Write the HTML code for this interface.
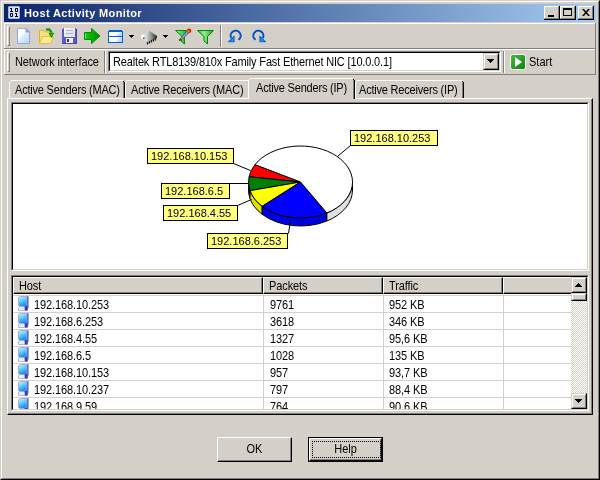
<!DOCTYPE html>
<html><head><meta charset="utf-8">
<style>
*{margin:0;padding:0;box-sizing:border-box}
html,body{width:600px;height:480px;overflow:hidden;background:#D4D0C8}
body{position:relative;font-family:"Liberation Sans",sans-serif;font-size:11px;color:#000}
.a{position:absolute}
.t{position:absolute;white-space:nowrap;line-height:13px;will-change:transform}
.u{transform:scaleY(1.12);transform-origin:0 6.4px}
</style></head><body>
<!-- window frame -->
<div class="a" style="left:0;top:0;width:600px;height:480px;border-top:1px solid #D4D0C8;border-left:1px solid #D4D0C8;border-right:1px solid #000;border-bottom:1px solid #000"></div>
<div class="a" style="left:1px;top:1px;width:598px;height:478px;border-top:1px solid #fff;border-left:1px solid #fff;border-right:1px solid #808080;border-bottom:1px solid #808080"></div>
<!-- title bar -->
<div class="a" style="left:4px;top:4px;width:592px;height:18px;background:linear-gradient(to right,#0A246A,#A6CAF0)"></div>
<svg class="a" style="left:8px;top:6px" width="12" height="13" viewBox="0 0 12 13" shape-rendering="crispEdges"><rect x="0" y="0" width="12" height="13" fill="#9CB0F8"/><rect x="1" y="1" width="10" height="11" fill="#D8E2FF"/><rect x="0" y="0" width="1" height="1" fill="#3050B0"/><rect x="11" y="0" width="1" height="1" fill="#3050B0"/><rect x="0" y="12" width="1" height="1" fill="#3050B0"/><rect x="11" y="12" width="1" height="1" fill="#3050B0"/><rect x="2" y="2" width="1" height="1" fill="#000"/><rect x="3" y="2" width="1" height="1" fill="#000"/><rect x="3" y="3" width="1" height="1" fill="#000"/><rect x="3" y="4" width="1" height="1" fill="#000"/><rect x="2" y="5" width="1" height="1" fill="#000"/><rect x="3" y="5" width="1" height="1" fill="#000"/><rect x="4" y="5" width="1" height="1" fill="#000"/><rect x="8" y="2" width="1" height="1" fill="#000"/><rect x="7" y="3" width="1" height="1" fill="#000"/><rect x="9" y="3" width="1" height="1" fill="#000"/><rect x="7" y="4" width="1" height="1" fill="#000"/><rect x="9" y="4" width="1" height="1" fill="#000"/><rect x="8" y="5" width="1" height="1" fill="#000"/><rect x="7" y="2" width="1" height="1" fill="#103060"/><rect x="9" y="2" width="1" height="1" fill="#103060"/><rect x="7" y="5" width="1" height="1" fill="#103060"/><rect x="9" y="5" width="1" height="1" fill="#103060"/><rect x="3" y="7" width="1" height="1" fill="#000"/><rect x="2" y="8" width="1" height="1" fill="#000"/><rect x="4" y="8" width="1" height="1" fill="#000"/><rect x="2" y="9" width="1" height="1" fill="#000"/><rect x="4" y="9" width="1" height="1" fill="#000"/><rect x="3" y="10" width="1" height="1" fill="#000"/><rect x="2" y="7" width="1" height="1" fill="#103060"/><rect x="4" y="7" width="1" height="1" fill="#103060"/><rect x="2" y="10" width="1" height="1" fill="#103060"/><rect x="4" y="10" width="1" height="1" fill="#103060"/><rect x="7" y="7" width="1" height="1" fill="#000"/><rect x="8" y="7" width="1" height="1" fill="#000"/><rect x="8" y="8" width="1" height="1" fill="#000"/><rect x="8" y="9" width="1" height="1" fill="#000"/><rect x="7" y="10" width="1" height="1" fill="#000"/><rect x="8" y="10" width="1" height="1" fill="#000"/><rect x="9" y="10" width="1" height="1" fill="#000"/></svg>
<div class="t" style="left:24px;top:7px;color:#fff;font-weight:bold;font-size:11px;letter-spacing:0.37px">Host Activity Monitor</div>
<div class="a" style="left:544px;top:6px;width:16px;height:14px;background:#D4D0C8;border-right:1px solid #000;border-bottom:1px solid #000"></div>
<div class="a" style="left:544px;top:6px;width:15px;height:13px;border-top:1px solid #fff;border-left:1px solid #fff;border-right:1px solid #808080;border-bottom:1px solid #808080"></div>
<div class="a" style="left:548px;top:15px;width:6px;height:2px;background:#000"></div>
<div class="a" style="left:560px;top:6px;width:16px;height:14px;background:#D4D0C8;border-right:1px solid #000;border-bottom:1px solid #000"></div>
<div class="a" style="left:560px;top:6px;width:15px;height:13px;border-top:1px solid #fff;border-left:1px solid #fff;border-right:1px solid #808080;border-bottom:1px solid #808080"></div>
<div class="a" style="left:563px;top:8px;width:9px;height:8px;border:1px solid #000;border-top-width:2px"></div>
<div class="a" style="left:578px;top:6px;width:16px;height:14px;background:#D4D0C8;border-right:1px solid #000;border-bottom:1px solid #000"></div>
<div class="a" style="left:578px;top:6px;width:15px;height:13px;border-top:1px solid #fff;border-left:1px solid #fff;border-right:1px solid #808080;border-bottom:1px solid #808080"></div>
<svg class="a" style="left:582px;top:9px" width="8" height="7" viewBox="0 0 8 7"><path d="M0 0h2l2 2.5L6 0h2L5 3.5 8 7H6L4 4.5 2 7H0l3-3.5z" fill="#000"/></svg>

<!-- rebar -->
<div class="a" style="left:4px;top:23px;width:592px;height:1px;background:#fff"></div>
<div class="a" style="left:4px;top:23px;width:1px;height:51px;background:#fff"></div>
<div class="a" style="left:595px;top:23px;width:1px;height:52px;background:#808080"></div>
<div class="a" style="left:4px;top:48px;width:592px;height:1px;background:#808080"></div>
<div class="a" style="left:4px;top:49px;width:591px;height:1px;background:#fff"></div>
<div class="a" style="left:4px;top:74px;width:592px;height:1px;background:#808080"></div>
<!-- grippers -->
<div class="a" style="left:7px;top:26px;width:3px;height:20px;border-top:1px solid #fff;border-left:1px solid #fff;border-right:1px solid #808080;border-bottom:1px solid #808080"></div>
<div class="a" style="left:7px;top:52px;width:3px;height:20px;border-top:1px solid #fff;border-left:1px solid #fff;border-right:1px solid #808080;border-bottom:1px solid #808080"></div>
<svg class="a" style="left:16px;top:28px" width="16" height="16" viewBox="0 0 16 16">
<defs><linearGradient id="gnew" x1="0" y1="0" x2="0.9" y2="1"><stop offset="0.38" stop-color="#fff"/><stop offset="0.5" stop-color="#DCEEFC"/><stop offset="1" stop-color="#B4DAF8"/></linearGradient></defs>
<path d="M1.5 0.5H10L13.5 4V15.5H1.5Z" fill="url(#gnew)" stroke="#9CA2DA"/>
<path d="M10 0.5L13.5 4H10Z" fill="#68B4F4" stroke="#8A92D4" stroke-width="0.8"/>
</svg>
<svg class="a" style="left:39px;top:28px" width="16" height="16" viewBox="0 0 16 16">
<path d="M0.5 15.5V2.5H5.5L6.5 4H11.5V8" fill="#F8E080" stroke="#E0B020"/>
<path d="M0.5 15.5L3.5 8.5H14.5L11.5 15.5Z" fill="#FCEB98" stroke="#E6BE30"/>
<path d="M7 1.5H10.5L12.5 4.5" fill="none" stroke="#009000" stroke-width="2"/>
<path d="M10 5.5L14.5 5L12.5 9.5Z" fill="#20C020" stroke="#008000" stroke-width="0.8"/>
</svg>
<svg class="a" style="left:62px;top:28px" width="16" height="16" viewBox="0 0 16 16" shape-rendering="crispEdges">
<defs><linearGradient id="gflp" x1="0" y1="0" x2="1" y2="1"><stop offset="0" stop-color="#F4F6FC"/><stop offset="1" stop-color="#D8DEF4"/></linearGradient></defs>
<rect x="0" y="1" width="15" height="15" fill="#5A5AC8"/>
<rect x="1" y="0" width="13" height="1" fill="#5A5AC8"/>
<rect x="2" y="0" width="11" height="9" fill="url(#gflp)"/>
<rect x="4" y="2" width="7" height="1" fill="#B8B0A8"/>
<rect x="4" y="5" width="7" height="1" fill="#B8B0A8"/>
<rect x="4" y="10" width="7" height="6" fill="#F0F0F8"/>
<rect x="5" y="11" width="2" height="3" fill="#2830A0"/>
<rect x="14" y="1" width="1" height="15" fill="#4040A8"/>
<rect x="0" y="15" width="15" height="1" fill="#4848B0"/>
</svg>
<svg class="a" style="left:84px;top:28px" width="17" height="16" viewBox="0 0 17 16">
<defs><linearGradient id="garr" x1="0" y1="0" x2="1" y2="0"><stop offset="0" stop-color="#10D010"/><stop offset="1" stop-color="#008800"/></linearGradient></defs>
<path d="M0.5 4.5H7.5V0.5L16 8L7.5 15.5V11.5H0.5Z" fill="url(#garr)" stroke="#009000" stroke-width="1"/>
<path d="M1.5 5.5V10.5" stroke="#60F060" stroke-width="1"/>
</svg>
<svg class="a" style="left:108px;top:30px" width="15" height="13" viewBox="0 0 15 13" shape-rendering="crispEdges">
<defs><linearGradient id="gwin" x1="0" y1="0" x2="1" y2="0.3"><stop offset="0.6" stop-color="#fff"/><stop offset="1" stop-color="#B0D8F8"/></linearGradient></defs>
<rect x="0" y="1" width="15" height="12" fill="#0060D8"/>
<rect x="1" y="0" width="13" height="1" fill="#0060D8"/>
<rect x="1" y="2" width="13" height="4" fill="url(#gwin)"/>
<rect x="1" y="7" width="13" height="5" fill="url(#gwin)"/>
</svg>
<svg class="a" style="left:129px;top:35px" width="5" height="3" viewBox="0 0 5 3" shape-rendering="crispEdges"><rect x="0" y="0" width="5" height="1"/><rect x="1" y="1" width="3" height="1"/><rect x="2" y="2" width="1" height="1"/></svg>
<svg class="a" style="left:140px;top:30px" width="18" height="15" viewBox="0 0 18 15">
<defs><linearGradient id="gchip" x1="0" y1="0" x2="1" y2="0"><stop offset="0" stop-color="#F4F8FF"/><stop offset="0.35" stop-color="#D0D4D4"/><stop offset="0.65" stop-color="#909090"/><stop offset="1" stop-color="#202020"/></linearGradient></defs>
<path d="M1 5.5L10 1L17 6V8L8 13L1 8Z" fill="url(#gchip)"/>
<path d="M1 5.5L4 4V9L1 8Z" fill="#FFFFFF"/>
<path d="M7.5 12V14.5M9.5 11V13.5M11.5 10V12.5M13.5 9V11.5M15.5 8V10.5" stroke="#202020" stroke-width="1.3"/>
<rect x="3" y="7.5" width="1.5" height="1.5" fill="#505050"/>
</svg>
<svg class="a" style="left:163px;top:35px" width="5" height="3" viewBox="0 0 5 3" shape-rendering="crispEdges"><rect x="0" y="0" width="5" height="1"/><rect x="1" y="1" width="3" height="1"/><rect x="2" y="2" width="1" height="1"/></svg>
<svg class="a" style="left:175px;top:28px" width="17" height="17" viewBox="0 0 17 17">
<defs><linearGradient id="gfil" x1="0" y1="0" x2="1" y2="0"><stop offset="0" stop-color="#90F890"/><stop offset="1" stop-color="#20B020"/></linearGradient></defs>
<path d="M0.5 2.5H11.5L9.5 8.5V16L6.5 13.5V8Z" fill="url(#gfil)" stroke="#009000"/>
<path d="M14 3L7 10" stroke="#5848A8" stroke-width="3"/>
<path d="M14 3L7 10" stroke="#78B8F8" stroke-width="1.4"/>
<path d="M7.5 9.5L5.5 11.5" stroke="#A07848" stroke-width="2.2"/>
<path d="M5.8 11.2L4.3 12.7" stroke="#383838" stroke-width="1.8"/>
<circle cx="14" cy="2.8" r="2.3" fill="#D82000"/>
<circle cx="13.3" cy="3.3" r="1" fill="#F8A010"/>
</svg>
<svg class="a" style="left:197px;top:29px" width="17" height="16" viewBox="0 0 17 16">
<defs><linearGradient id="gfil2" x1="0" y1="0" x2="1" y2="0"><stop offset="0" stop-color="#40C040"/><stop offset="0.4" stop-color="#90F090"/><stop offset="1" stop-color="#20A020"/></linearGradient></defs>
<path d="M0.5 1.5H16.5L10.5 7.5V15L7 12V7.5Z" fill="url(#gfil2)" stroke="#008800"/>
</svg>
<div class="a" style="left:220px;top:25px;width:1px;height:22px;background:#808080"></div>
<div class="a" style="left:221px;top:25px;width:1px;height:22px;background:#fff"></div>
<svg class="a" style="left:228px;top:29px" width="14" height="14" viewBox="0 0 14 14">
<path d="M3.2 9A5 5 0 1 1 10.5 10.8" fill="none" stroke="#0050C8" stroke-width="2"/>
<path d="M0.2 12.8L6.2 7V12.8Z" fill="#1878E8" stroke="#0050C8" stroke-width="0.7"/><circle cx="4.3" cy="11" r="0.8" fill="#40B0FF"/>
</svg>
<svg class="a" style="left:252px;top:29px" width="14" height="14" viewBox="0 0 14 14">
<g transform="translate(14,0) scale(-1,1)">
<path d="M3.2 9A5 5 0 1 1 10.5 10.8" fill="none" stroke="#0050C8" stroke-width="2"/>
<path d="M0.2 12.8L6.2 7V12.8Z" fill="#1878E8" stroke="#0050C8" stroke-width="0.7"/><circle cx="4.3" cy="11" r="0.8" fill="#40B0FF"/>
</g>
</svg>

<!-- band 2 -->
<div class="t u" style="left:15px;top:56px;letter-spacing:-0.1px">Network interface</div>
<div class="a" style="left:104px;top:51px;width:1px;height:22px;background:#808080"></div>
<div class="a" style="left:105px;top:51px;width:1px;height:22px;background:#fff"></div>
<div class="a" style="left:108px;top:51px;width:393px;height:21px;border-top:1px solid #808080;border-left:1px solid #808080;border-right:1px solid #fff;border-bottom:1px solid #fff;background:#fff"></div>
<div class="a" style="left:109px;top:52px;width:391px;height:19px;border-top:1px solid #000;border-left:1px solid #000;border-right:1px solid #D4D0C8;border-bottom:1px solid #D4D0C8"></div>
<div class="t u" style="left:113px;top:56px;letter-spacing:-0.16px">Realtek RTL8139/810x Family Fast Ethernet NIC [10.0.0.1]</div>
<div class="a" style="left:483px;top:53px;width:16px;height:17px;background:#D4D0C8;border-top:1px solid #D4D0C8;border-left:1px solid #D4D0C8;border-right:1px solid #000;border-bottom:1px solid #000"></div>
<div class="a" style="left:484px;top:54px;width:14px;height:15px;border-top:1px solid #fff;border-left:1px solid #fff;border-right:1px solid #808080;border-bottom:1px solid #808080"></div>
<svg class="a" style="left:487px;top:59px" width="7" height="4" shape-rendering="crispEdges"><rect x="0" y="0" width="7" height="1"/><rect x="1" y="1" width="5" height="1"/><rect x="2" y="2" width="3" height="1"/><rect x="3" y="3" width="1" height="1"/></svg>
<div class="a" style="left:503px;top:51px;width:1px;height:22px;background:#808080"></div>
<div class="a" style="left:504px;top:51px;width:1px;height:22px;background:#fff"></div>
<svg class="a" style="left:510px;top:54px" width="16" height="16" viewBox="0 0 16 16">
<defs><linearGradient id="gst" x1="0" y1="0" x2="1" y2="1"><stop offset="0" stop-color="#40C040"/><stop offset="1" stop-color="#108010"/></linearGradient></defs>
<rect x="0.5" y="0.5" width="15" height="15" rx="2" fill="url(#gst)" stroke="#fff" stroke-width="1"/>
<path d="M5 3L12 8L5 13Z" fill="#fff"/>
</svg>
<div class="t u" style="left:529px;top:56px">Start</div>
<!-- tab panel -->
<div class="a" style="left:7px;top:98px;width:586px;height:317px;border-top:1px solid #fff;border-left:1px solid #fff;border-right:1px solid #000;border-bottom:1px solid #000"></div>
<div class="a" style="left:8px;top:99px;width:584px;height:315px;border-right:1px solid #808080;border-bottom:1px solid #808080"></div>
<!-- tab1 -->
<div class="a" style="left:11px;top:80px;width:112px;height:1px;background:#fff"></div>
<div class="a" style="left:10px;top:81px;width:1px;height:1px;background:#fff"></div>
<div class="a" style="left:9px;top:82px;width:1px;height:16px;background:#fff"></div>
<div class="a" style="left:123px;top:81px;width:1px;height:17px;background:#808080"></div>
<div class="a" style="left:124px;top:82px;width:1px;height:16px;background:#000"></div>
<div class="a" style="left:123px;top:81px;width:1px;height:1px;background:#000"></div>
<div class="t u" style="left:15px;top:84px;letter-spacing:-0.2px">Active Senders (MAC)</div>
<!-- tab2 -->
<div class="a" style="left:127px;top:80px;width:121px;height:1px;background:#fff"></div>
<div class="a" style="left:126px;top:81px;width:1px;height:1px;background:#fff"></div>
<div class="a" style="left:125px;top:82px;width:1px;height:16px;background:#fff"></div>
<div class="t u" style="left:131px;top:84px;letter-spacing:-0.2px">Active Receivers (MAC)</div>
<!-- tab3 selected -->
<div class="a" style="left:248px;top:79px;width:107px;height:21px;background:#D4D0C8"></div>
<div class="a" style="left:250px;top:78px;width:103px;height:1px;background:#fff"></div>
<div class="a" style="left:249px;top:79px;width:1px;height:1px;background:#fff"></div>
<div class="a" style="left:248px;top:80px;width:1px;height:19px;background:#fff"></div>
<div class="a" style="left:353px;top:79px;width:1px;height:20px;background:#808080"></div>
<div class="a" style="left:354px;top:80px;width:1px;height:19px;background:#000"></div>
<div class="a" style="left:353px;top:79px;width:1px;height:1px;background:#000"></div>
<div class="t u" style="left:256px;top:82px;letter-spacing:-0.2px">Active Senders (IP)</div>
<!-- tab4 -->
<div class="a" style="left:357px;top:80px;width:105px;height:1px;background:#fff"></div>
<div class="a" style="left:356px;top:81px;width:1px;height:1px;background:#fff"></div>
<div class="a" style="left:355px;top:82px;width:1px;height:16px;background:#fff"></div>
<div class="a" style="left:462px;top:81px;width:1px;height:17px;background:#808080"></div>
<div class="a" style="left:463px;top:82px;width:1px;height:16px;background:#000"></div>
<div class="a" style="left:462px;top:81px;width:1px;height:1px;background:#000"></div>
<div class="t u" style="left:359px;top:84px;letter-spacing:-0.2px">Active Receivers (IP)</div>

<!-- chart box -->
<div class="a" style="left:11px;top:102px;width:578px;height:169px;background:#fff;border-top:1px solid #808080;border-left:1px solid #808080;border-right:1px solid #fff;border-bottom:1px solid #fff"></div>
<div class="a" style="left:12px;top:103px;width:576px;height:167px;border-top:1px solid #000;border-left:1px solid #000;border-right:1px solid #D4D0C8;border-bottom:1px solid #D4D0C8"></div>
<svg class="a" style="left:0;top:0" width="600" height="480" viewBox="0 0 600 480">
<path d="M248.50 182.00 A52 36 0 0 0 250.02 190.65 L250.02 198.65 A52 36 0 0 1 248.50 190.00 Z" fill="#007000" stroke="#000" stroke-width="1"/>
<path d="M250.02 190.65 A52 36 0 0 0 262.16 206.32 L262.16 214.32 A52 36 0 0 1 250.02 198.65 Z" fill="#E0E000" stroke="#000" stroke-width="1"/>
<path d="M262.16 206.32 A52 36 0 0 0 326.89 213.02 L326.89 221.02 A52 36 0 0 1 262.16 214.32 Z" fill="#0000E0" stroke="#000" stroke-width="1"/>
<path d="M326.89 213.02 A52 36 0 0 0 352.50 182.00 L352.50 190.00 A52 36 0 0 1 326.89 221.02 Z" fill="#E0E0E0" stroke="#000" stroke-width="1"/>
<path d="M300.5 182 L254.98 164.60 A52 36 0 0 0 249.04 176.80 Z" fill="#FF0000" stroke="#000" stroke-width="1" stroke-linejoin="bevel"/>
<path d="M300.5 182 L249.04 176.80 A52 36 0 0 0 250.02 190.65 Z" fill="#008000" stroke="#000" stroke-width="1" stroke-linejoin="bevel"/>
<path d="M300.5 182 L250.02 190.65 A52 36 0 0 0 262.16 206.32 Z" fill="#FFFF00" stroke="#000" stroke-width="1" stroke-linejoin="bevel"/>
<path d="M300.5 182 L262.16 206.32 A52 36 0 0 0 326.89 213.02 Z" fill="#0000FF" stroke="#000" stroke-width="1" stroke-linejoin="bevel"/>
<path d="M300.5 182 L326.89 213.02 A52 36 0 1 0 254.98 164.60 Z" fill="#FFFFFF" stroke="#000" stroke-width="1" stroke-linejoin="bevel"/>

<g stroke="#000" stroke-width="1" fill="none">
<path d="M337.5 156.5L350.5 145.5"/>
<path d="M233.5 163.5L250.5 170.5"/>
<path d="M229.5 183.5H248.5"/>
<path d="M237.5 205.5L251.5 199.5"/>
<path d="M288.5 233.5L290.5 220.5"/>
</g>
<g fill="#FFFF80" stroke="#000" stroke-width="1">
<rect x="350.5" y="130.5" width="87" height="15"/>
<rect x="147.5" y="148.5" width="86" height="15"/>
<rect x="161.5" y="183.5" width="68" height="15"/>
<rect x="163.5" y="205.5" width="74" height="15"/>
<rect x="207.5" y="233.5" width="80" height="15"/>
</g>
</svg>
<div class="t" style="left:354px;top:132px">192.168.10.253</div>
<div class="t" style="left:151px;top:150px">192.168.10.153</div>
<div class="t" style="left:165px;top:185px">192.168.6.5</div>
<div class="t" style="left:167px;top:207px">192.168.4.55</div>
<div class="t" style="left:211px;top:235px">192.168.6.253</div>

<!-- listview -->
<div class="a" style="left:11px;top:275px;width:578px;height:136px;background:#fff;border-top:1px solid #808080;border-left:1px solid #808080;border-right:1px solid #fff;border-bottom:1px solid #fff"></div>
<div class="a" style="left:12px;top:276px;width:576px;height:134px;border-top:1px solid #000;border-left:1px solid #000;border-right:1px solid #D4D0C8;border-bottom:1px solid #D4D0C8"></div>
<div class="a" style="left:13px;top:277px;width:558px;height:132px;overflow:hidden">
<div class="a" style="left:0;top:18px;width:558px;height:1px;background:#D4D0C8"></div>
<div class="a" style="left:0;top:35px;width:558px;height:1px;background:#D4D0C8"></div>
<div class="a" style="left:0;top:52px;width:558px;height:1px;background:#D4D0C8"></div>
<div class="a" style="left:0;top:69px;width:558px;height:1px;background:#D4D0C8"></div>
<div class="a" style="left:0;top:86px;width:558px;height:1px;background:#D4D0C8"></div>
<div class="a" style="left:0;top:103px;width:558px;height:1px;background:#D4D0C8"></div>
<div class="a" style="left:0;top:120px;width:558px;height:1px;background:#D4D0C8"></div>
<div class="a" style="left:250px;top:0;width:1px;height:132px;background:#D4D0C8"></div>
<div class="a" style="left:370px;top:0;width:1px;height:132px;background:#D4D0C8"></div>
<div class="a" style="left:490px;top:0;width:1px;height:132px;background:#D4D0C8"></div>
<svg class="a" style="left:3px;top:18px" width="16" height="16" viewBox="0 0 16 16">
<defs><linearGradient id="gmon0" x1="0.2" y1="0" x2="0.6" y2="1"><stop offset="0" stop-color="#B8F8FF"/><stop offset="0.6" stop-color="#40B8F8"/><stop offset="1" stop-color="#1880E8"/></linearGradient></defs>
<path d="M2.5 2.5L5 1.5H11V10.5L8 11.5H3.5L2.5 10.5Z" fill="url(#gmon0)" stroke="#A8A8E0" stroke-width="1"/>
<path d="M11 1.2H12.6V12.5L11.5 15.5H8.5V11.5L11 10.5Z" fill="#6068C8"/>
<path d="M8.5 11.5L11 10.5L11.5 15.5H8.5Z" fill="#3040B0"/>
<path d="M2 12H8.5V15.5H3Z" fill="#E8ECF8"/>
<path d="M2.5 12V15.5H8.5" fill="none" stroke="#B0B8E8" stroke-width="1"/>
</svg>
<div class="t u" style="left:21px;top:22px;letter-spacing:-0.1px">192.168.10.253</div>
<div class="t u" style="left:257px;top:22px;letter-spacing:-0.1px">9761</div>
<div class="t u" style="left:376px;top:22px;letter-spacing:-0.1px">952 KB</div>
<svg class="a" style="left:3px;top:35px" width="16" height="16" viewBox="0 0 16 16">
<defs><linearGradient id="gmon1" x1="0.2" y1="0" x2="0.6" y2="1"><stop offset="0" stop-color="#B8F8FF"/><stop offset="0.6" stop-color="#40B8F8"/><stop offset="1" stop-color="#1880E8"/></linearGradient></defs>
<path d="M2.5 2.5L5 1.5H11V10.5L8 11.5H3.5L2.5 10.5Z" fill="url(#gmon1)" stroke="#A8A8E0" stroke-width="1"/>
<path d="M11 1.2H12.6V12.5L11.5 15.5H8.5V11.5L11 10.5Z" fill="#6068C8"/>
<path d="M8.5 11.5L11 10.5L11.5 15.5H8.5Z" fill="#3040B0"/>
<path d="M2 12H8.5V15.5H3Z" fill="#E8ECF8"/>
<path d="M2.5 12V15.5H8.5" fill="none" stroke="#B0B8E8" stroke-width="1"/>
</svg>
<div class="t u" style="left:21px;top:39px;letter-spacing:-0.1px">192.168.6.253</div>
<div class="t u" style="left:257px;top:39px;letter-spacing:-0.1px">3618</div>
<div class="t u" style="left:376px;top:39px;letter-spacing:-0.1px">346 KB</div>
<svg class="a" style="left:3px;top:52px" width="16" height="16" viewBox="0 0 16 16">
<defs><linearGradient id="gmon2" x1="0.2" y1="0" x2="0.6" y2="1"><stop offset="0" stop-color="#B8F8FF"/><stop offset="0.6" stop-color="#40B8F8"/><stop offset="1" stop-color="#1880E8"/></linearGradient></defs>
<path d="M2.5 2.5L5 1.5H11V10.5L8 11.5H3.5L2.5 10.5Z" fill="url(#gmon2)" stroke="#A8A8E0" stroke-width="1"/>
<path d="M11 1.2H12.6V12.5L11.5 15.5H8.5V11.5L11 10.5Z" fill="#6068C8"/>
<path d="M8.5 11.5L11 10.5L11.5 15.5H8.5Z" fill="#3040B0"/>
<path d="M2 12H8.5V15.5H3Z" fill="#E8ECF8"/>
<path d="M2.5 12V15.5H8.5" fill="none" stroke="#B0B8E8" stroke-width="1"/>
</svg>
<div class="t u" style="left:21px;top:56px;letter-spacing:-0.1px">192.168.4.55</div>
<div class="t u" style="left:257px;top:56px;letter-spacing:-0.1px">1327</div>
<div class="t u" style="left:376px;top:56px;letter-spacing:-0.1px">95,6 KB</div>
<svg class="a" style="left:3px;top:69px" width="16" height="16" viewBox="0 0 16 16">
<defs><linearGradient id="gmon3" x1="0.2" y1="0" x2="0.6" y2="1"><stop offset="0" stop-color="#B8F8FF"/><stop offset="0.6" stop-color="#40B8F8"/><stop offset="1" stop-color="#1880E8"/></linearGradient></defs>
<path d="M2.5 2.5L5 1.5H11V10.5L8 11.5H3.5L2.5 10.5Z" fill="url(#gmon3)" stroke="#A8A8E0" stroke-width="1"/>
<path d="M11 1.2H12.6V12.5L11.5 15.5H8.5V11.5L11 10.5Z" fill="#6068C8"/>
<path d="M8.5 11.5L11 10.5L11.5 15.5H8.5Z" fill="#3040B0"/>
<path d="M2 12H8.5V15.5H3Z" fill="#E8ECF8"/>
<path d="M2.5 12V15.5H8.5" fill="none" stroke="#B0B8E8" stroke-width="1"/>
</svg>
<div class="t u" style="left:21px;top:73px;letter-spacing:-0.1px">192.168.6.5</div>
<div class="t u" style="left:257px;top:73px;letter-spacing:-0.1px">1028</div>
<div class="t u" style="left:376px;top:73px;letter-spacing:-0.1px">135 KB</div>
<svg class="a" style="left:3px;top:86px" width="16" height="16" viewBox="0 0 16 16">
<defs><linearGradient id="gmon4" x1="0.2" y1="0" x2="0.6" y2="1"><stop offset="0" stop-color="#B8F8FF"/><stop offset="0.6" stop-color="#40B8F8"/><stop offset="1" stop-color="#1880E8"/></linearGradient></defs>
<path d="M2.5 2.5L5 1.5H11V10.5L8 11.5H3.5L2.5 10.5Z" fill="url(#gmon4)" stroke="#A8A8E0" stroke-width="1"/>
<path d="M11 1.2H12.6V12.5L11.5 15.5H8.5V11.5L11 10.5Z" fill="#6068C8"/>
<path d="M8.5 11.5L11 10.5L11.5 15.5H8.5Z" fill="#3040B0"/>
<path d="M2 12H8.5V15.5H3Z" fill="#E8ECF8"/>
<path d="M2.5 12V15.5H8.5" fill="none" stroke="#B0B8E8" stroke-width="1"/>
</svg>
<div class="t u" style="left:21px;top:90px;letter-spacing:-0.1px">192.168.10.153</div>
<div class="t u" style="left:257px;top:90px;letter-spacing:-0.1px">957</div>
<div class="t u" style="left:376px;top:90px;letter-spacing:-0.1px">93,7 KB</div>
<svg class="a" style="left:3px;top:103px" width="16" height="16" viewBox="0 0 16 16">
<defs><linearGradient id="gmon5" x1="0.2" y1="0" x2="0.6" y2="1"><stop offset="0" stop-color="#B8F8FF"/><stop offset="0.6" stop-color="#40B8F8"/><stop offset="1" stop-color="#1880E8"/></linearGradient></defs>
<path d="M2.5 2.5L5 1.5H11V10.5L8 11.5H3.5L2.5 10.5Z" fill="url(#gmon5)" stroke="#A8A8E0" stroke-width="1"/>
<path d="M11 1.2H12.6V12.5L11.5 15.5H8.5V11.5L11 10.5Z" fill="#6068C8"/>
<path d="M8.5 11.5L11 10.5L11.5 15.5H8.5Z" fill="#3040B0"/>
<path d="M2 12H8.5V15.5H3Z" fill="#E8ECF8"/>
<path d="M2.5 12V15.5H8.5" fill="none" stroke="#B0B8E8" stroke-width="1"/>
</svg>
<div class="t u" style="left:21px;top:107px;letter-spacing:-0.1px">192.168.10.237</div>
<div class="t u" style="left:257px;top:107px;letter-spacing:-0.1px">797</div>
<div class="t u" style="left:376px;top:107px;letter-spacing:-0.1px">88,4 KB</div>
<svg class="a" style="left:3px;top:120px" width="16" height="16" viewBox="0 0 16 16">
<defs><linearGradient id="gmon6" x1="0.2" y1="0" x2="0.6" y2="1"><stop offset="0" stop-color="#B8F8FF"/><stop offset="0.6" stop-color="#40B8F8"/><stop offset="1" stop-color="#1880E8"/></linearGradient></defs>
<path d="M2.5 2.5L5 1.5H11V10.5L8 11.5H3.5L2.5 10.5Z" fill="url(#gmon6)" stroke="#A8A8E0" stroke-width="1"/>
<path d="M11 1.2H12.6V12.5L11.5 15.5H8.5V11.5L11 10.5Z" fill="#6068C8"/>
<path d="M8.5 11.5L11 10.5L11.5 15.5H8.5Z" fill="#3040B0"/>
<path d="M2 12H8.5V15.5H3Z" fill="#E8ECF8"/>
<path d="M2.5 12V15.5H8.5" fill="none" stroke="#B0B8E8" stroke-width="1"/>
</svg>
<div class="t u" style="left:21px;top:124px;letter-spacing:-0.1px">192.168.9.59</div>
<div class="t u" style="left:257px;top:124px;letter-spacing:-0.1px">764</div>
<div class="t u" style="left:376px;top:124px;letter-spacing:-0.1px">90,6 KB</div>
<div class="a" style="left:0;top:0;width:558px;height:17px;background:#D4D0C8"></div>
<div class="a" style="left:0px;top:0;width:250px;height:17px;border-top:1px solid #fff;border-left:1px solid #fff;border-right:1px solid #000;border-bottom:1px solid #000"></div>
<div class="a" style="left:1px;top:1px;width:248px;height:15px;border-right:1px solid #808080;border-bottom:1px solid #808080"></div>
<div class="t u" style="left:6px;top:3px;letter-spacing:-0.1px">Host</div>
<div class="a" style="left:250px;top:0;width:120px;height:17px;border-top:1px solid #fff;border-left:1px solid #fff;border-right:1px solid #000;border-bottom:1px solid #000"></div>
<div class="a" style="left:251px;top:1px;width:118px;height:15px;border-right:1px solid #808080;border-bottom:1px solid #808080"></div>
<div class="t u" style="left:256px;top:3px;letter-spacing:-0.1px">Packets</div>
<div class="a" style="left:370px;top:0;width:120px;height:17px;border-top:1px solid #fff;border-left:1px solid #fff;border-right:1px solid #000;border-bottom:1px solid #000"></div>
<div class="a" style="left:371px;top:1px;width:118px;height:15px;border-right:1px solid #808080;border-bottom:1px solid #808080"></div>
<div class="t u" style="left:376px;top:3px;letter-spacing:-0.1px">Traffic</div>
<div class="a" style="left:490px;top:0;width:80px;height:17px;border-top:1px solid #fff;border-left:1px solid #fff;border-right:1px solid #000;border-bottom:1px solid #000"></div>
<div class="a" style="left:491px;top:1px;width:78px;height:15px;border-right:1px solid #808080;border-bottom:1px solid #808080"></div>
</div>
<div class="a" style="left:571px;top:277px;width:16px;height:132px;background-color:#fff;background-image:repeating-conic-gradient(#D4D0C8 0 25%,#fff 0 50%);background-size:2px 2px"></div>
<div class="a" style="left:571px;top:277px;width:16px;height:16px;background:#D4D0C8;border-top:1px solid #D4D0C8;border-left:1px solid #D4D0C8;border-right:1px solid #000;border-bottom:1px solid #000"></div>
<div class="a" style="left:572px;top:278px;width:14px;height:14px;border-top:1px solid #fff;border-left:1px solid #fff;border-right:1px solid #808080;border-bottom:1px solid #808080"></div>
<svg class="a" style="left:575px;top:283px" width="7" height="4" shape-rendering="crispEdges"><rect x="3" y="0" width="1" height="1"/><rect x="2" y="1" width="3" height="1"/><rect x="1" y="2" width="5" height="1"/><rect x="0" y="3" width="7" height="1"/></svg>
<div class="a" style="left:571px;top:293px;width:16px;height:8px;background:#D4D0C8;border-top:1px solid #D4D0C8;border-left:1px solid #D4D0C8;border-right:1px solid #000;border-bottom:1px solid #000"></div>
<div class="a" style="left:572px;top:294px;width:14px;height:6px;border-top:1px solid #fff;border-left:1px solid #fff;border-right:1px solid #808080;border-bottom:1px solid #808080"></div>
<div class="a" style="left:571px;top:393px;width:16px;height:16px;background:#D4D0C8;border-top:1px solid #D4D0C8;border-left:1px solid #D4D0C8;border-right:1px solid #000;border-bottom:1px solid #000"></div>
<div class="a" style="left:572px;top:394px;width:14px;height:14px;border-top:1px solid #fff;border-left:1px solid #fff;border-right:1px solid #808080;border-bottom:1px solid #808080"></div>
<svg class="a" style="left:575px;top:399px" width="7" height="4" shape-rendering="crispEdges"><rect x="0" y="0" width="7" height="1"/><rect x="1" y="1" width="5" height="1"/><rect x="2" y="2" width="3" height="1"/><rect x="3" y="3" width="1" height="1"/></svg>

<!-- buttons -->
<div class="a" style="left:217px;top:437px;width:75px;height:25px;border-top:1px solid #fff;border-left:1px solid #fff;border-right:1px solid #000;border-bottom:1px solid #000"></div>
<div class="a" style="left:218px;top:438px;width:73px;height:23px;border-right:1px solid #808080;border-bottom:1px solid #808080"></div>
<div class="t u" style="left:217px;top:443px;width:75px;text-align:center">OK</div>
<div class="a" style="left:308px;top:437px;width:75px;height:25px;border:1px solid #000"></div>
<div class="a" style="left:309px;top:438px;width:73px;height:23px;border-top:1px solid #fff;border-left:1px solid #fff;border-right:1px solid #000;border-bottom:1px solid #000"></div>
<div class="a" style="left:310px;top:439px;width:71px;height:21px;border-right:1px solid #808080;border-bottom:1px solid #808080"></div>
<div class="a" style="left:312px;top:441px;width:69px;height:17px;border:1px dotted #000"></div>
<div class="t u" style="left:308px;top:443px;width:75px;text-align:center">Help</div>
</body></html>
